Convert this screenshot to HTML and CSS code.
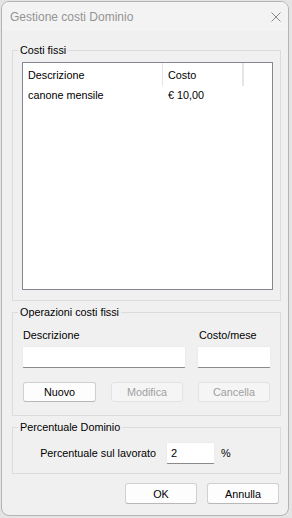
FILE: index.html
```html
<!DOCTYPE html>
<html lang="it">
<head>
  <meta charset="UTF-8" />
  <title>Gestione costi Dominio</title>
  <link rel="stylesheet" href="styles.css">
</head>
<body>
  <div class="window">
    <div class="titlebar">
      <span class="title">Gestione costi Dominio</span>
      <svg class="close" width="10" height="10" viewBox="0 0 10 10">
        <path d="M0.5 0.5 L9.5 9.5 M9.5 0.5 L0.5 9.5" stroke="#8a8a8a" stroke-width="1" fill="none" />
      </svg>
    </div>

    <div class="content">
      <fieldset class="group group-list">
        <legend>Costi fissi</legend>
        <div class="listview">
          <div class="lv-header">
            <div class="col col-desc">Descrizione</div>
            <div class="col col-cost">Costo</div>
            <div class="col col-rest"></div>
          </div>
          <div class="lv-row">
            <div class="col col-desc">canone mensile</div>
            <div class="col col-cost">€ 10,00</div>
          </div>
        </div>
      </fieldset>

      <fieldset class="group group-ops">
        <legend>Operazioni costi fissi</legend>
        <div class="ops-fields">
          <label for="desc">Descrizione</label>
          <label for="cost" class="label-cost">Costo/mese</label>
          <input type="text" id="desc" class="field" />
          <input type="text" id="cost" class="field" />
        </div>
        <div class="ops-buttons">
          <button class="btn btn-default">Nuovo</button>
          <button class="btn" disabled>Modifica</button>
          <button class="btn" disabled>Cancella</button>
        </div>
      </fieldset>

      <fieldset class="group group-perc">
        <legend>Percentuale Dominio</legend>
        <div class="perc-row">
          <label for="perc" class="perc-label">Percentuale sul lavorato</label>
          <input type="text" id="perc" class="field field-perc" value="2" />
          <span class="perc-unit">%</span>
        </div>
      </fieldset>

      <div class="dialog-buttons">
        <button class="btn">OK</button>
        <button class="btn">Annulla</button>
      </div>
    </div>
  </div>
</body>
</html>
```

FILE: styles.css
```css
body {
  margin: 0;
  background-color: #e4e4e4;
  font-family: 'Liberation Sans', Arial, sans-serif;
  font-size: 10.8px;
  color: #000;
}

.window {
  box-sizing: border-box;
  width: 288px;
  height: 515px;
  margin: 1px 0 0 1px;
  border: 1px solid #b4b4b4;
  border-radius: 8px;
  background-color: #f0f0f0;
  overflow: hidden;
  display: flex;
  flex-direction: column;
}

.titlebar {
  height: 29px;
  flex: none;
  display: flex;
  align-items: center;
  justify-content: space-between;
  padding: 0 7px 0 8px;
  background-color: #f3f3f3;
}

.title {
  font-size: 12px;
  color: #949494;
}

.content {
  padding: 12px 7px 0 10px;
}

.group {
  margin: 0;
  border: 1px solid #dcdcdc;
  min-width: 0;
}

.group legend {
  padding: 0 2px;
  margin-left: -4px;
  line-height: 14px;
}

.group-list {
  padding: 0 7px 10px 9px;
}

.listview {
  margin-top: 5px;
  height: 228px;
  box-sizing: border-box;
  border: 1px solid #828790;
  background-color: #fff;
}

.lv-header,
.lv-row {
  display: flex;
}

.lv-header {
  height: 23px;
  align-items: center;
}

.lv-header .col {
  height: 23px;
  line-height: 24px;
  border-right: 1px solid #e5e5e5;
}

.lv-row {
  height: 18px;
  line-height: 19px;
}

.col {
  box-sizing: border-box;
  padding-left: 5px;
}

.col-desc {
  width: 140px;
}

.col-cost {
  width: 80px;
}

.col-rest {
  width: 0;
  padding: 0;
}

.group-ops {
  margin-top: 4px;
  padding: 0 9px 13px 9px;
}

.ops-fields {
  margin-top: 9px;
  display: grid;
  grid-template-columns: 164px 74px;
  column-gap: 11px;
  row-gap: 4px;
}

.ops-fields label {
  line-height: 14px;
  padding-left: 1px;
}

.ops-fields .label-cost {
  padding-left: 2px;
}

.field {
  box-sizing: border-box;
  height: 22px;
  margin: 0;
  padding: 0 4px;
  border: 1px solid #ececec;
  border-bottom: 1px solid #8a8a8a;
  border-radius: 2px;
  background-color: #fff;
  font-family: inherit;
  font-size: 11px;
  color: #000;
  outline: none;
}

.ops-buttons {
  margin: 14px 0 0 1px;
  display: grid;
  grid-template-columns: 73px 72px 72px;
  column-gap: 15px;
}

.btn {
  box-sizing: border-box;
  height: 20px;
  margin: 0;
  padding: 0;
  border: 1px solid #d0d0d0;
  border-bottom-color: #b8b8b8;
  border-radius: 3px;
  background-color: #fdfdfd;
  font-family: inherit;
  font-size: 10.8px;
  color: #000;
}

.btn:disabled {
  background-color: #f5f5f5;
  border-color: #e2e2e2;
  color: #a0a0a0;
}

.group-perc {
  margin-top: 4px;
  padding: 0 9px 9px 9px;
}

.perc-row {
  margin-top: 8px;
  display: flex;
  align-items: center;
}

.perc-label {
  width: 134px;
  text-align: right;
}

.field-perc {
  width: 49px;
  margin-left: 10px;
}

.perc-unit {
  margin-left: 6px;
}

.dialog-buttons {
  margin: 9px 2px 0 0;
  display: flex;
  justify-content: flex-end;
  gap: 10px;
}

.dialog-buttons .btn {
  width: 72px;
  height: 21px;
}
```
